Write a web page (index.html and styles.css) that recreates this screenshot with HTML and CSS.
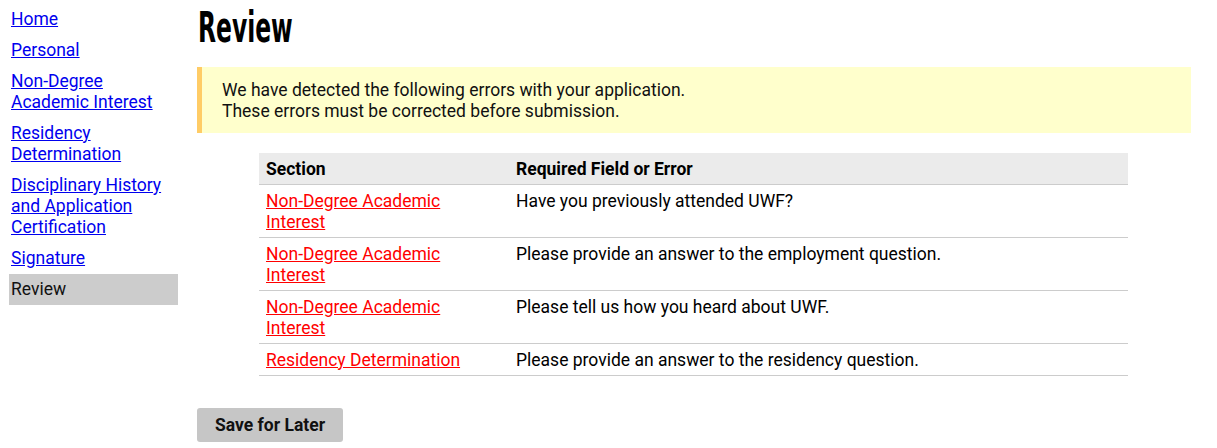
FILE: index.html
```html
<!DOCTYPE html>
<html lang="en">
<head>
<meta charset="utf-8">
<title>Review</title>
<link rel="stylesheet" href="styles.css">
</head>
<body>
<div class="page">
  <nav class="sidebar">
    <ul class="nav-list">
      <li class="nav-item"><a href="#">Home</a></li>
      <li class="nav-item"><a href="#">Personal</a></li>
      <li class="nav-item"><a href="#">Non-Degree Academic Interest</a></li>
      <li class="nav-item"><a href="#">Residency Determination</a></li>
      <li class="nav-item"><a href="#">Disciplinary History and Application Certification</a></li>
      <li class="nav-item"><a href="#">Signature</a></li>
      <li class="nav-item active">Review</li>
    </ul>
  </nav>
  <main class="main">
    <h1 class="title"><span class="title-text">Review</span></h1>
    <div class="alert">
      <p>We have detected the following errors with your application.</p>
      <p>These errors must be corrected before submission.</p>
    </div>
    <table class="errors">
      <colgroup><col class="col-section"><col></colgroup>
      <thead>
        <tr><th>Section</th><th>Required Field or Error</th></tr>
      </thead>
      <tbody>
        <tr><td><a href="#">Non-Degree Academic Interest</a></td><td>Have you previously attended UWF?</td></tr>
        <tr><td><a href="#">Non-Degree Academic Interest</a></td><td>Please provide an answer to the employment question.</td></tr>
        <tr><td><a href="#">Non-Degree Academic Interest</a></td><td>Please tell us how you heard about UWF.</td></tr>
        <tr><td><a href="#">Residency Determination</a></td><td>Please provide an answer to the residency question.</td></tr>
      </tbody>
    </table>
    <button class="btn" type="button">Save for Later</button>
  </main>
</div>
</body>
</html>
```

FILE: styles.css
```css
html, body {
  margin: 0;
  padding: 0;
  background: #fff;
}
body {
  font-family: Roboto, "Liberation Sans", sans-serif;
  font-size: 17.5px;
  line-height: 21px;
  color: #000;
}
.page {
  display: flex;
  align-items: flex-start;
  padding: 3px 26px 0 9px;
}
.sidebar {
  width: 169px;
  flex: none;
  margin-right: 19px;
  padding-top: 1px;
}
.nav-list {
  list-style: none;
  margin: 0;
  padding: 0;
}
.nav-item {
  padding: 5px 2px;
}
.nav-item a {
  color: #0000ee;
}
.nav-item.active {
  background: #cccccc;
  color: #111;
}
.main {
  flex: 1;
  min-width: 0;
}
.title {
  margin: 0;
  height: 64px;
  font-family: "Liberation Sans Narrow", "DejaVu Sans Condensed", sans-serif;
  font-weight: bold;
  font-size: 42px;
  line-height: 50px;
}
.title-text {
  display: inline-block;
  transform: scaleX(0.62);
  transform-origin: left center;
  margin-left: 1px;
}
.alert {
  background: #ffffcc;
  border-left: 5px solid #ffcc66;
  padding: 13px 20px 11px;
  color: #111;
}
.alert p {
  margin: 0;
}
.errors {
  width: 869px;
  margin: 20px 0 32px 62px;
  border-collapse: collapse;
  table-layout: fixed;
}
.col-section {
  width: 250px;
}
.errors th, .errors td {
  text-align: left;
  vertical-align: top;
  padding: 6px 7px 4px;
  border-bottom: 1px solid #cccccc;
}
.errors th {
  background: #ebebeb;
  font-weight: bold;
}
.errors td a {
  color: #ff0000;
}
.btn {
  font-family: Roboto, "Liberation Sans", sans-serif;
  font-size: 17.5px;
  font-weight: bold;
  line-height: 21px;
  background: #c6c6c6;
  color: #111;
  border: none;
  border-radius: 3px;
  padding: 7px 18px 6px;
}
```
